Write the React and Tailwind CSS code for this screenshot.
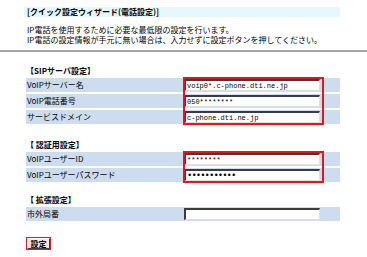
import React from "react";

const jp = "font-['MS_PGothic','Noto_Sans_CJK_JP',sans-serif]";

const Row = ({ label, children }) => (
  <div className="flex items-center h-[14px] w-[314px] bg-[#cedcef]">
    <div className="w-[158px] pl-[1px] leading-[14px]">{label}</div>
    {children}
  </div>
);

const Field = ({ value = "", type = "text" }) => (
  <input
    readOnly
    type={type}
    defaultValue={value}
    className={`w-[136px] h-[12px] bg-white border-t-2 border-l-2 border-b border-r border-t-[#3c3c3c] border-l-[#3c3c3c] border-b-[#e4e0d8] border-r-[#e4e0d8] px-[1px] ${type === "password" ? "text-[9px] tracking-[-1px]" : "text-[7px]"} leading-[9px] font-['Liberation_Mono',monospace] text-black outline-none`}
  />
);

const Section = ({ title, boxed, children }) => (
  <div className="ml-[26px]">
    <div className="font-bold h-[9px] leading-[9px]">{title}</div>
    <div className="relative mt-[3px] flex flex-col gap-[2px]">
      {children}
      {boxed && (
        <div className="absolute left-[157px] top-[-1px] w-[141px] bottom-[-1px] border-2 border-[#e8141c] pointer-events-none" />
      )}
    </div>
  </div>
);

export default function App() {
  return (
    <div className={`w-[367px] h-[257px] bg-white text-black text-[8px] leading-[9px] overflow-hidden ${jp}`}>
      <div className="pt-[7px] pl-[24px]">
        <div className="w-[316px] h-[10px] bg-[#e6f8fc] pl-[3px] font-bold leading-[10px]">
          [クイック設定ウィザード(電話設定)]
        </div>
      </div>
      <div className="pl-[27px] mt-[8px] flex flex-col gap-[1px]">
        <span className="leading-[9px]">IP電話を使用するために必要な最低限の設定を行います。</span>
        <span className="leading-[9px]">IP電話の設定情報が手元に無い場合は、入力せずに設定ボタンを押してください。</span>
      </div>
      <div className="mt-[6px] h-[2px] bg-[#a4a4a4]" />

      <div className="mt-[14px]">
        <Section title="【SIPサーバ設定】" boxed>
          <Row label="VoIPサーバー名"><Field value="voip0*.c-phone.dti.ne.jp" /></Row>
          <Row label="VoIP電話番号"><Field value="050********" /></Row>
          <Row label="サービスドメイン"><Field value="c-phone.dti.ne.jp" /></Row>
        </Section>
      </div>

      <div className="mt-[16px]">
        <Section title="【 認証用設定】" boxed>
          <Row label="VoIPユーザーID"><Field value="********" /></Row>
          <Row label="VoIPユーザーパスワード"><Field type="password" value="***********" /></Row>
        </Section>
      </div>

      <div className="mt-[13px]">
        <Section title="【 拡張設定】">
          <Row label="市外局番"><Field /></Row>
        </Section>
      </div>

      <div className="mt-[16px] ml-[26px]">
        <div className="inline-block border border-[#e8141c] p-0">
          <button className="h-[11px] w-[23px] flex items-center justify-center bg-[#ece9e4] border border-t-white border-l-white border-b-[#404040] border-r-[#404040] text-[8px] leading-[9px] font-bold">
            設定
          </button>
        </div>
      </div>
    </div>
  );
}
